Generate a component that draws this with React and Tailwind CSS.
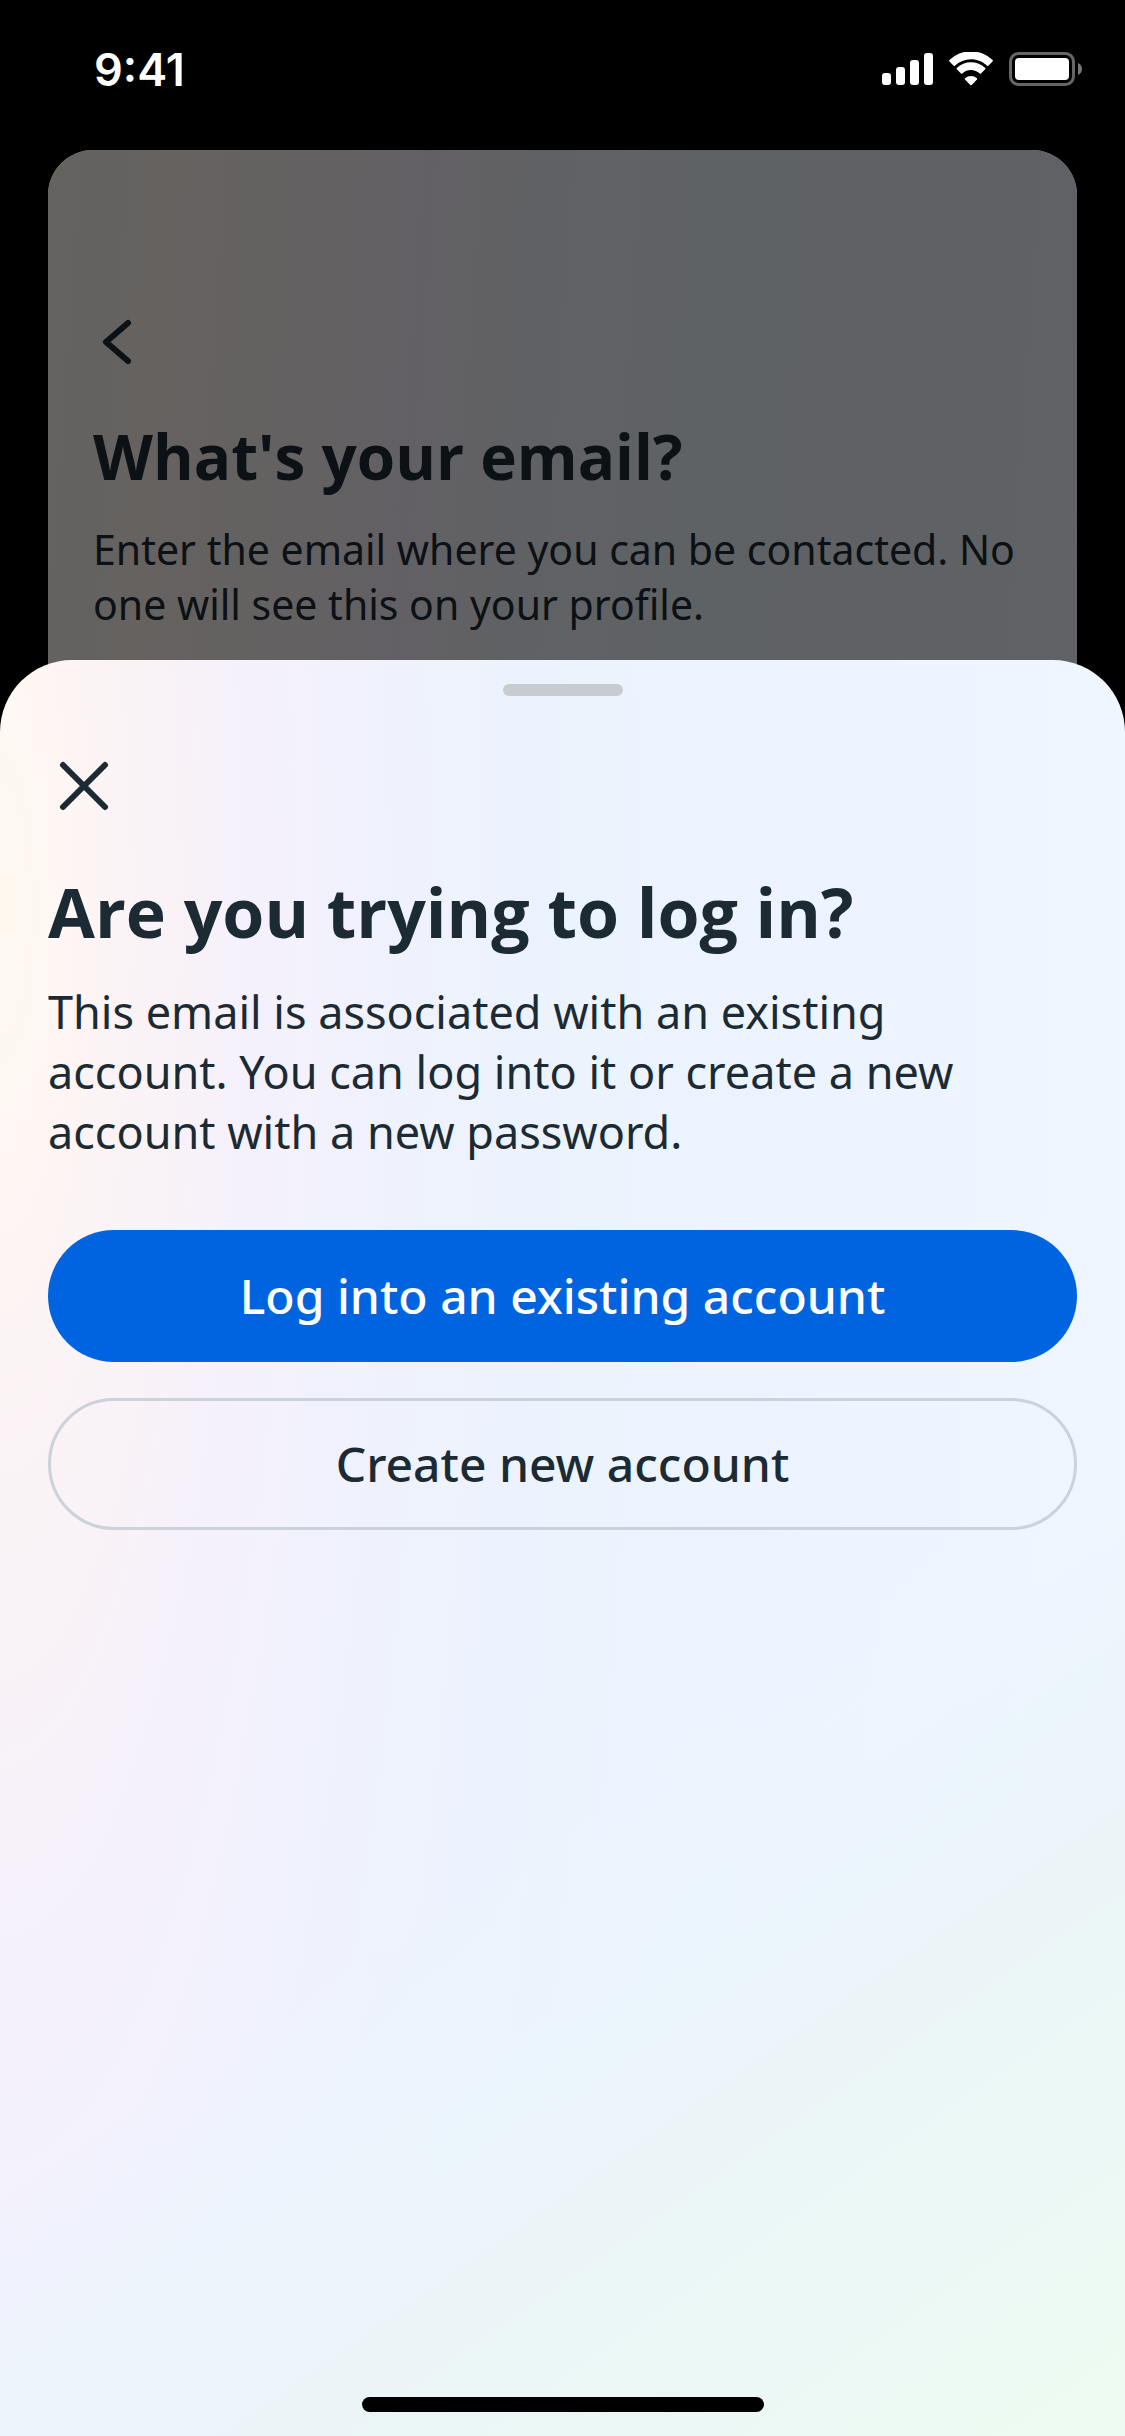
import { useState } from "react";

const SHEET_BG =
  "bg-[linear-gradient(145deg,transparent_60%,#ebf5fb_73%,#ebf5f7_78%,#ecf8f5_88%,#edfbf2_98%),radial-gradient(100%_270%_at_0%_14%,#fff9f0_0%,#fef7f3_5%,#fbf3f5_11%,#f8f2f8_17%,#f5f1fc_22%,#eff2fd_35%,#ebf3fd_52%,#edf4ff_75%,#eff6ff_100%)]";

const CARD_BG =
  "bg-[linear-gradient(94deg,#f8f7f0_0%,#fdf4ef_12%,#faf2f4_24%,#f5f1fa_36%,#f0f3fa_48%,#ecf4fa_64%,#eef2fc_85%,#f0f4fc_100%)]";

const SignalIcon = () => (
  <svg width="51" height="34" viewBox="0 0 51 34" fill="#fff" aria-hidden="true">
    <rect x="0" y="21" width="9" height="12" rx="3" />
    <rect x="14" y="15" width="9" height="18" rx="3" />
    <rect x="28" y="8" width="9" height="25" rx="3" />
    <rect x="42" y="1" width="9" height="32" rx="3" />
  </svg>
);

const WifiIcon = () => (
  <svg width="46" height="34" viewBox="0 0 46 34" fill="#fff" aria-hidden="true">
    <path d="M23 7.2c6 0 11.700 2.300 16.100 6.500.4.300.9.300 1.200 0l4.300-4.300c.4-.4.4-1 0-1.400A31 31 0 0 0 1.400 8c-.4.400-.4 1 0 1.400l4.300 4.300c.3.300.8.300 1.200 0A23.300 23.300 0 0 1 23 7.200Z" />
    <path d="M23 18.100c3.200 0 6.300 1.200 8.700 3.400.4.300.9.300 1.300 0l4.200-4.300c.4-.4.4-1 0-1.300a20.600 20.600 0 0 0-28.400 0c-.4.300-.4.900 0 1.300l4.200 4.300c.4.300.9.300 1.300 0a12.900 12.900 0 0 1 8.700-3.400Z" />
    <path d="M29 26.200c.4.400.4.900 0 1.300l-5.300 5.400c-.4.400-1 .4-1.400 0L17 27.500c-.4-.4-.4-.9 0-1.300a9.200 9.200 0 0 1 12 0Z" />
  </svg>
);

const BatteryIcon = () => (
  <svg width="73" height="34" viewBox="0 0 73 34" fill="none" aria-hidden="true">
    <rect x="1.500" y="1.500" width="63" height="31" rx="8" stroke="#666" strokeWidth="3" />
    <rect x="6" y="6" width="54" height="22" rx="4" fill="#fff" />
    <path d="M69 11c2.400 1 4 3.300 4 6s-1.600 5-4 6V11Z" fill="#777" />
  </svg>
);

const StatusBar = () => (
  <header className="flex h-[138px] items-center justify-between pr-[43px] pl-[94px] mb-3">
    <span className="font-['Inter',sans-serif] text-[45px] leading-none font-semibold text-white">9:41</span>
    <div className="flex items-center gap-[15px]">
      <SignalIcon />
      <WifiIcon />
      <BatteryIcon />
    </div>
  </header>
);

const EmailStep = () => (
  <section className={`relative mx-12 overflow-hidden rounded-t-[45px] px-[45px] pt-[168px] pb-[100px] ${CARD_BG}`}>
    <button type="button" aria-label="Back" className="block">
      <svg width="48" height="48" viewBox="0 0 48 48" fill="none" aria-hidden="true">
        <path d="M35 5 13 24l22 19" stroke="#1c2b33" strokeWidth="6" strokeLinecap="round" strokeLinejoin="round" />
      </svg>
    </button>
    <h2 className="mt-[54px] font-['Open_Sans',sans-serif] text-[62px] leading-[72px] font-bold">What's your email?</h2>
    <p className="mt-[30px] text-[41px] leading-[55px]">
      Enter the email where you can be contacted. No one will see this on your profile.
    </p>
    {/* scrim */}
    <div className="absolute inset-0 bg-black/60" />
  </section>
);

export default function App() {
  const [open, setOpen] = useState(true);

  return (
    <div className="flex min-h-screen flex-col overflow-hidden bg-black font-['Noto_Sans',sans-serif] text-[#1c2b33]">
      <StatusBar />
      <EmailStep />
      {open && (
        <main
          role="dialog"
          aria-labelledby="login-title"
          className={`relative -mt-[72px] flex flex-1 flex-col rounded-t-[72px] px-12 pt-6 pb-6 ${SHEET_BG}`}
        >
          <div className="h-3 w-[120px] self-center rounded-full bg-[#c8cbcf]" />
          <button type="button" aria-label="Close" onClick={() => setOpen(false)} className="mt-[54px] self-start">
            <svg width="72" height="72" viewBox="0 0 72 72" fill="none" aria-hidden="true">
              <path d="M15 15l42 42M57 15 15 57" stroke="#1c2b33" strokeWidth="6" strokeLinecap="round" />
            </svg>
          </button>
          <h1 id="login-title" className="mt-12 font-['Open_Sans',sans-serif] text-[68px] leading-[84px] font-bold">
            Are you trying to log in?
          </h1>
          <p className="mt-7 pr-12 text-[45px] leading-[60px]">
            This email is associated with an existing account. You can log into it or create a new account with a new password.
          </p>
          <div className="mt-[68px] flex flex-col gap-9 text-[48px] leading-[60px] font-medium">
            <button type="button" className="h-[132px] rounded-full bg-[#0064e0] text-white">
              Log into an existing account
            </button>
            <button type="button" className="h-[132px] rounded-full border-3 border-[#cbd2d9]">
              Create new account
            </button>
          </div>
          {/* home indicator */}
          <div className="mt-auto h-[15px] w-[402px] self-center rounded-full bg-black" />
        </main>
      )}
    </div>
  );
}
